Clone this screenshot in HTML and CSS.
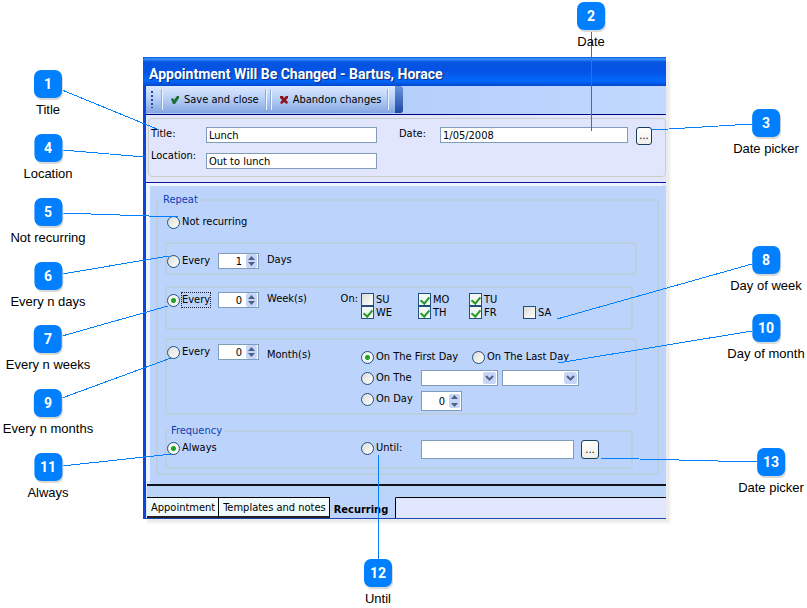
FILE: index.html
```html
<!DOCTYPE html>
<html lang="en">
<head>
    <meta charset="UTF-8">
    <meta name="viewport" content="width=device-width, initial-scale=1.0">
    <title>Recurring appointment</title>
    <link rel="stylesheet" href="styles.css">
</head>
<body>

<main class="figure">

    <!-- Appointment window -->
    <form class="window">
        <h1 class="titlebar">Appointment Will Be Changed - Bartus, Horace</h1>

        <div class="toolbar">
            <div class="tools">
                <span class="grip"></span>
                <button type="button" class="tool">
                    <svg width="10" height="10" viewBox="0 0 10 10"><path d="M1 4 L3 3 L4 5 L7 1 L9 1 L9 3 L5 9 L3 9 Z" fill="#1c6b34"/></svg>
                    Save and close
                </button>
                <button type="button" class="tool">
                    <svg width="10" height="10" viewBox="0 0 10 10"><path d="M1 1 L4 1 L5 3 L7 1 L9 1 L9 3 L7 5 L9 7 L8 9 L6 8 L5 7 L3 9 L1 8 L3 5 L1 3 Z" fill="#8c1420"/></svg>
                    Abandon changes
                </button>
                <span class="cap"></span>
            </div>
        </div>

        <div class="header">
            <div class="details">
                <label for="title">Title:</label>
                <input class="text" type="text" id="title" value="Lunch">
                <label class="date-label" for="date">Date:</label>
                <input class="text" type="text" id="date" value="1/05/2008">
                <button type="button" class="picker" aria-label="Pick date">...</button>
                <label class="location-label" for="location">Location:</label>
                <input class="text" type="text" id="location" value="Out to lunch">
            </div>
        </div>

        <div class="content">
            <fieldset class="repeat">
                <legend>Repeat</legend>

                <label class="option not-recurring"><input type="radio" name="repeat">Not recurring</label>

                <div class="group days">
                    <label class="option"><input type="radio" name="repeat">Every</label>
                    <span class="spin">
                        <input type="number" value="1" aria-label="Number of days">
                        <svg viewBox="0 0 11 14"><rect width="11" height="14" rx="2"/><path d="M2 6 L5.500 2 L9 6 Z M2 8 L5.500 12 L9 8 Z"/></svg>
                    </span>
                    <span>Days</span>
                </div>

                <div class="group weeks">
                    <label class="option focused"><input type="radio" name="repeat" checked><span>Every</span></label>
                    <span class="spin">
                        <input type="number" value="0" aria-label="Number of weeks">
                        <svg viewBox="0 0 11 14"><rect width="11" height="14" rx="2"/><path d="M2 6 L5.500 2 L9 6 Z M2 8 L5.500 12 L9 8 Z"/></svg>
                    </span>
                    <div class="unit"><span>Week(s)</span><span class="on">On:</span></div>
                    <div class="weekdays">
                        <label class="day"><input type="checkbox">SU</label>
                        <label class="day"><input type="checkbox" checked>MO</label>
                        <label class="day"><input type="checkbox" checked>TU</label>
                        <span></span>
                        <label class="day"><input type="checkbox" checked>WE</label>
                        <label class="day"><input type="checkbox" checked>TH</label>
                        <label class="day"><input type="checkbox" checked>FR</label>
                        <label class="day"><input type="checkbox">SA</label>
                    </div>
                </div>

                <div class="group months">
                    <label class="option"><input type="radio" name="repeat">Every</label>
                    <span class="spin">
                        <input type="number" value="0" aria-label="Number of months">
                        <svg viewBox="0 0 11 14"><rect width="11" height="14" rx="2"/><path d="M2 6 L5.500 2 L9 6 Z M2 8 L5.500 12 L9 8 Z"/></svg>
                    </span>
                    <span class="month-unit">Month(s)</span>
                    <div class="monthdays">
                        <div class="line">
                            <label class="option first"><input type="radio" name="month" checked>On The First Day</label>
                            <label class="option"><input type="radio" name="month">On The Last Day</label>
                        </div>
                        <div class="line">
                            <label class="option short"><input type="radio" name="month">On The</label>
                            <span class="select">
                                <select aria-label="Week of month"><option></option></select>
                                <svg viewBox="0 0 13 12"><rect width="13" height="12" rx="2"/><path class="arrow" d="M3 4 L6.500 7.500 L10 4"/></svg>
                            </span>
                            <span class="select">
                                <select aria-label="Day of week"><option></option></select>
                                <svg viewBox="0 0 13 12"><rect width="13" height="12" rx="2"/><path class="arrow" d="M3 4 L6.500 7.500 L10 4"/></svg>
                            </span>
                        </div>
                        <div class="line">
                            <label class="option short"><input type="radio" name="month">On Day</label>
                            <span class="spin tall">
                                <input type="number" value="0" aria-label="Day of month">
                                <svg viewBox="0 0 11 14"><rect width="11" height="14" rx="2"/><path d="M2 5 L5.500 1 L9 5 Z M2 9 L5.500 13 L9 9 Z"/></svg>
                            </span>
                        </div>
                    </div>
                </div>

                <fieldset class="frequency">
                    <legend>Frequency</legend>
                    <div class="line">
                        <label class="option always"><input type="radio" name="frequency" checked>Always</label>
                        <label class="option short"><input type="radio" name="frequency">Until:</label>
                        <input class="text until" type="text" aria-label="Until date">
                        <button type="button" class="picker" aria-label="Pick end date">...</button>
                    </div>
                </fieldset>
            </fieldset>
        </div>

        <nav class="tabs">
            <a href="#">Appointment</a>
            <a href="#">Templates and notes</a>
            <a href="#" class="active">Recurring</a>
            <span class="rest"></span>
        </nav>
    </form>

    <!-- Leader lines -->
    <svg class="leaders">
        <line x1="62" y1="90" x2="157" y2="129"/>
        <line x1="591" y1="30" x2="591" y2="131"/>
        <line x1="752" y1="124" x2="652" y2="130"/>
        <line x1="62" y1="150" x2="145" y2="157"/>
        <line x1="62" y1="213" x2="178" y2="217"/>
        <line x1="62" y1="274" x2="169" y2="256"/>
        <line x1="62" y1="336" x2="168" y2="306"/>
        <line x1="752" y1="264" x2="557" y2="319"/>
        <line x1="62" y1="398" x2="171" y2="358"/>
        <line x1="752" y1="331" x2="558" y2="363"/>
        <line x1="62" y1="466" x2="172" y2="454"/>
        <line x1="378" y1="455" x2="378" y2="559"/>
        <line x1="757" y1="462" x2="600" y2="458"/>
    </svg>

    <!-- Callouts -->
    <div class="callout c1"><b>1</b>Title</div>
    <div class="callout c2"><b>2</b>Date</div>
    <div class="callout c3"><b>3</b>Date picker</div>
    <div class="callout c4"><b>4</b>Location</div>
    <div class="callout c5"><b>5</b>Not recurring</div>
    <div class="callout c6"><b>6</b>Every n days</div>
    <div class="callout c7"><b>7</b>Every n weeks</div>
    <div class="callout c8"><b>8</b>Day of week</div>
    <div class="callout c9"><b>9</b>Every n months</div>
    <div class="callout c10"><b>10</b>Day of month</div>
    <div class="callout c11"><b>11</b>Always</div>
    <div class="callout c12"><b>12</b>Until</div>
    <div class="callout c13"><b>13</b>Date picker</div>
</main>

</body>
</html>
```
FILE: styles.css
```css
* { box-sizing: border-box; }

body {
    margin: 0;
    background: #fff;
    color: #000;
    font: 11px/14px "DejaVu Sans Condensed", "DejaVu Sans", sans-serif;
}

input, button, select { font: inherit; color: inherit; margin: 0; }

.figure { position: relative; padding: 57px 141px 89px 143px; }

/* Window */
.window {
    border-left: 3px solid #0a46dc;
    border-bottom: 1px solid #1c46b0;
    background: #e0e6fd;
    box-shadow: 4px 4px 2px #ececec;
}

.titlebar {
    margin: 0 0 0 -3px;
    padding: 3px 6px 0;
    height: 29px;
    border-radius: 4px 0 0 0;
    background: linear-gradient(#0a5ae0, #3a93fb 2px, #0654e0 5px, #0453e6 14px, #0468fc 24px, #0447cc);
    color: #fff;
    font: bold 14px/28px Roboto, sans-serif;
    text-shadow: 1px 1px 1px #0a2a80;
}

.toolbar {
    height: 29px;
    border-bottom: 1px solid #00007c;
    background: linear-gradient(90deg, #a8c6f8, #c2d8fe);
}

.tools {
    display: flex;
    width: max-content;
    height: 27px;
    background: linear-gradient(#dce9ff, #b4cdf6 50%, #83a6e0);
    border-radius: 0 3px 3px 0;
    overflow: hidden;
}

.grip { width: 2px; margin: 5px 6px 5px 5px; background: repeating-linear-gradient(#27479a 0 2px, transparent 2px 4px); }

.tool {
    display: flex;
    align-items: center;
    gap: 4px;
    margin: 3px 2px;
    padding: 0 6px 0 8px;
    border: solid #8fabdc;
    border-width: 0 1px;
    box-shadow: 1px 0 #f0f6ff, inset 1px 0 #f0f6ff;
    background: none;
}

.cap { width: 8px; margin-left: 5px; background: linear-gradient(#6a95dc, #1c48a4); }

/* Title, location and date */
.header { padding: 3px 0 5px 2px; border-bottom: 1px solid #10109c; background: #e2e6fd; }

.details {
    display: grid;
    grid-template-columns: 56px minmax(0, 171px) 63px minmax(0, 188px) 24px;
    grid-template-rows: 16px 16px;
    row-gap: 10px;
    padding: 8px 0 7px 1px;
    border: 1px solid #c9cccb;
    border-radius: 4px;
}

.details label { padding-left: 1px; }
.details .date-label { padding-left: 22px; }
.details .location-label { margin-top: -4px; }
.details .picker { margin-left: 8px; }

.text {
    width: 100%;
    height: 16px;
    padding: 0 2px;
    border: 1px solid #7f9db9;
    background: #fff;
}

.picker {
    width: 16px;
    height: 18px;
    padding: 0;
    border: 1px solid #17405f;
    border-radius: 3px;
    background: linear-gradient(#fff, #f0efe8);
    line-height: 16px;
}

/* Recurrence panel */
.content {
    padding: 7px 7px 9px 6px;
    margin: 3px 0 0 4px;
    background: #bcd4fc;
    box-shadow: -4px -3px #eff5ff;
}

fieldset { min-width: 0; margin: 0; border: 2px solid #bacfe0; border-radius: 3px; }
legend { padding: 0 2px; color: #0c3fae; }

.repeat { padding: 0 20px 4px 7px; }
.repeat > legend { margin-left: -4px; }

.option, .day { display: flex; align-items: center; white-space: nowrap; }
.option { gap: 2px; height: 16px; }
.not-recurring { margin: 7px 2px 0; }

.group {
    display: grid;
    grid-template-columns: 51px 49px 94px 1fr;
    border: 2px solid #bacfe0;
    border-radius: 3px;
}

.days { margin-top: 12px; padding: 9px 0 4px; }
.weeks { margin: 11px 4px 0 0; padding: 4px 0 9px; }
.months { margin-top: 8px; padding: 4px 0 1px; }

.focused span { outline: 1px dotted #223; }
.unit { display: flex; justify-content: space-between; }
.on { padding-right: 3px; }
.month-unit { padding-top: 4px; }

.weekdays {
    display: grid;
    grid-template-columns: 57px 51px 54px 1fr;
    grid-auto-rows: 13px;
    padding-top: 1px;
}
.day { gap: 2px; }

.monthdays { padding-top: 5px; }
.line { display: flex; }
.monthdays .line { height: 21px; gap: 4px; }
.line .short { width: 60px; }
.monthdays .short { width: 56px; }
.first { width: 107px; }
.always { width: 194px; }

/* Radios and tick boxes */
input[type="radio"], input[type="checkbox"] {
    appearance: none;
    flex: none;
    width: 13px;
    height: 13px;
    border: 1px solid #21507f;
    background: linear-gradient(135deg, #dcdcd7, #fff);
}

input[type="radio"] { border-radius: 50%; }
input[type="radio"]:checked { background: radial-gradient(circle, #21a121 0 2px, #f4f6f2 3px); }

input[type="checkbox"]:checked { display: grid; background: #f4f8f4; }
input[type="checkbox"]:checked::before {
    content: "";
    width: 4px;
    height: 7px;
    margin: 1px 0 0 3px;
    border: solid #2a9a2a;
    border-width: 0 2px 2px 0;
    transform: rotate(40deg);
}

/* Spinners and drop-downs */
.spin, .select { position: relative; display: block; height: 16px; }
.spin { width: 41px; }
.select { width: 77px; }

.spin input, .select select {
    appearance: none;
    display: block;
    width: 100%;
    height: 100%;
    padding: 0 16px 0 2px;
    border: 1px solid #7f9db9;
    border-radius: 0;
    background: #fff;
    text-align: right;
}

.spin input { appearance: textfield; }
.spin input::-webkit-inner-spin-button { appearance: none; margin: 0; }

.spin svg, .select svg { position: absolute; top: 1px; right: 2px; height: 14px; pointer-events: none; }
.spin svg { width: 11px; }
.select svg { width: 13px; }
.spin rect, .select rect { fill: #c6d5f8; }
.spin path { fill: #4d6185; }
.select .arrow { fill: none; stroke: #4d6185; stroke-width: 2; }
.spin.tall { height: 20px; }
.spin.tall svg { height: 18px; }

/* Frequency */
.frequency { margin: 9px 4px 0 0; padding: 2px 0 8px; }
.frequency legend { margin-left: 2px; }
.until { width: 153px; height: 19px; }
.frequency .picker { width: 18px; height: 19px; margin-left: 7px; }

/* Tabs */
.tabs {
    display: flex;
    margin-left: 1px;
    padding-top: 11px;
    border-top: 2px solid #10141c;
    background: linear-gradient(#b9d6f8 11px, #e0e6fd 11px);
}

.tabs a {
    height: 21px;
    padding: 3px 3px 0 4px;
    border-top: 1px solid #000;
    border-right: 1px solid #000;
    border-bottom: 2px solid #222;
    background: #f2fbfc;
    color: #000;
    text-decoration: none;
    white-space: nowrap;
}

.tabs .active { border-top-color: #bcd4fc; border-bottom: 0; padding: 5px 7px 0 4px; background: #bcd4fc; font-weight: bold; }
.rest { flex: 1; border-top: 1px solid #000; }

/* Numbered callouts placed over the window */
.leaders { position: absolute; left: 0; top: 0; width: 100%; height: 100%; pointer-events: none; }
.leaders line { stroke: #0080ff; stroke-width: 1; shape-rendering: crispEdges; }

.callout {
    position: absolute;
    display: flex;
    flex-direction: column;
    align-items: center;
    gap: 4px;
    width: max-content;
    transform: translateX(-50%);
    font: 13px/16px "Liberation Sans", Arial, sans-serif;
}

.callout b {
    width: 28px;
    height: 28px;
    border-radius: 7px;
    background: #0080ff;
    box-shadow: 1px 2px #d9d9d9;
    color: #fff;
    font: bold 14px/28px Roboto, sans-serif;
    text-align: center;
}

.c1 { left: 48px; top: 70px; }
.c2 { left: 591px; top: 2px; }
.c3 { left: 766px; top: 109px; }
.c4 { left: 48px; top: 134px; }
.c5 { left: 48px; top: 198px; }
.c6 { left: 48px; top: 262px; }
.c7 { left: 48px; top: 325px; }
.c8 { left: 766px; top: 246px; }
.c9 { left: 48px; top: 389px; }
.c10 { left: 766px; top: 314px; }
.c11 { left: 48px; top: 453px; }
.c12 { left: 378px; top: 559px; }
.c13 { left: 771px; top: 448px; }
```
